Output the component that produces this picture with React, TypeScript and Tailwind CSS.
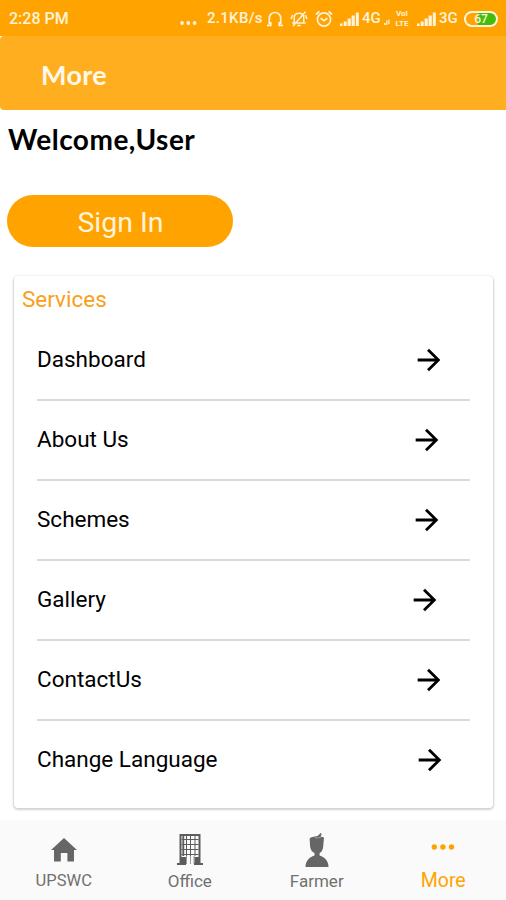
import React from 'react';
import { MdArrowForward } from 'react-icons/md';

const services = [
  { label: 'Dashboard', width: 'w-[109px]', arrow: 'mr-[24px]' },
  { label: 'About Us', width: 'w-[92px]', arrow: 'mr-[26px]' },
  { label: 'Schemes', width: 'w-[93px]', arrow: 'mr-[26px]' },
  { label: 'Gallery', width: 'w-[70px]', arrow: 'mr-[28px]' },
  { label: 'ContactUs', width: 'w-[105px]', arrow: 'mr-[24px]' },
  { label: 'Change Language', width: 'w-[181px]', arrow: 'mr-[23px]' },
];

const Signal: React.FC = () => (
  <svg width="19" height="14" viewBox="0 0 19 14" fill="#fff3dc">
    <rect x="0" y="11.5" width="2.6" height="2.5" />
    <rect x="3.7" y="9.5" width="3" height="4.5" />
    <rect x="7.6" y="6.5" width="3.2" height="7.5" />
    <rect x="11.6" y="3.5" width="3.2" height="10.5" />
    <rect x="15.8" y="0.5" width="3" height="13.5" />
  </svg>
);

const StatusBar: React.FC = () => (
  <header className="flex h-9 items-center bg-[#ffa300] pl-[9px] pr-2 pt-px text-[16px] font-medium text-[#fff3dc]">
    <span className="w-[171px] whitespace-nowrap">2:28 PM</span>
    <svg className="mt-2" width="18" height="4" viewBox="0 0 18 4" fill="currentColor">
      <circle cx="2" cy="2" r="1.9" />
      <circle cx="8.3" cy="2" r="1.9" />
      <circle cx="14.6" cy="2" r="1.9" />
    </svg>
    <span className="ml-[9px] w-[57px] whitespace-nowrap text-[15px] tracking-[0.3px]">2.1KB/s</span>
    <svg className="ml-[2px]" width="18" height="18" viewBox="0 0 18 18" fill="none" stroke="currentColor" strokeWidth="1.7">
      <path d="M3.3 14V8.2a5.7 5.7 0 0 1 11.4 0V14M1 15.3h3.8v-3.2M17 15.3h-3.8v-3.2" />
    </svg>
    <svg className="ml-[6px]" width="18" height="18" viewBox="0 0 18 18" fill="none" stroke="currentColor" strokeWidth="1.5">
      <path d="M4.2 12.8V8c0-2.8 2-4.7 4.8-4.7s4.8 1.9 4.8 4.7v4.8M2.2 13.1h13.6M7.2 15.5h3.6M15.5 1.8 3 16M1 9 2.7 5M17 9l-1.7-4" />
    </svg>
    <svg className="ml-[7px]" width="18" height="18" viewBox="0 0 18 18" fill="none" stroke="currentColor" strokeWidth="1.7">
      <circle cx="9" cy="9.5" r="6.6" />
      <path d="m5.6 8.2 3.4 2.6 3.4-2.6M1 4.5 4.4 1.4M17 4.5l-3.4-3.1" />
    </svg>
    <span className="ml-[7px]"><Signal /></span>
    <span className="ml-[3px] w-[21px] text-[15px]">4G</span>
    <svg className="ml-px mt-[7px]" width="6" height="6" viewBox="0 0 6 6" fill="currentColor">
      <path d="M0 4h1.5v2H0zM2.2 1.5h1.3V6H2.2zM4.3.5h1.3V5H4.3z" />
    </svg>
    <span className="ml-[3px] flex w-[18px] shrink-0 flex-col text-center text-[8px] font-bold leading-[10px]">
      <span>VoI</span>
      <span>LTE</span>
    </span>
    <span className="ml-[6px]"><Signal /></span>
    <span className="ml-[3px] w-[21px] text-[15px]">3G</span>
    <div className="ml-[4px] flex h-4 w-[34px] shrink-0 items-center justify-center rounded-full border-2 border-[#fff3dc] bg-[linear-gradient(90deg,#ffa300_40%,#43bd0b_40%)] text-[12px] leading-none">
      67
    </div>
  </header>
);

const HomeIcon: React.FC = () => (
  <svg width="26" height="24" viewBox="0 0 26 24" fill="#666">
    <path d="M13 0 26 12h-3v11.5h-6.6V15H9.8v8.5H3V12H0z" />
  </svg>
);

const OfficeIcon: React.FC = () => (
  <svg width="26" height="32" viewBox="0 0 26 32" fill="none" stroke="#5c5c5c">
    <path strokeWidth="2" d="M3.5 31V2h19v29M0 31h9M17 31h9" />
    <path strokeWidth="1.8" d="M6.3 3v20" />
    <path strokeWidth="1" d="M4.5 6.5h17M4.5 11.5h17M4.5 16.5h17M4.5 21.5h17M9.5 3v20M13.5 3v20M18 3v20" />
    <path stroke="#999" strokeWidth="1" d="M9.5 23v8M13.5 23v8M17 23v8" />
    <path fill="#5c5c5c" stroke="none" d="M3 24h6v7H3zM17.5 24h5.5v7h-5.5z" />
  </svg>
);

const FarmerIcon: React.FC = () => (
  <svg width="24" height="34" viewBox="0 0 24 34" fill="#666">
    <path d="m4.6 5.5 1.8-1.2L12.5 3 15.7 0l1 .8L15.6 3.4l3.4 1.1-.8 9c-.4 4-1.8 5.5-3.6 6.6v2.4C20 24.2 23.5 28 23.5 34H.5c0-6 3.5-9.8 9-11.5v-2.4C7 19 5.6 17 5.1 13.5z" />
    <path d="M10 4.8c2 .3 4 .1 6-.5" fill="none" stroke="#aaa" strokeWidth=".8" />
  </svg>
);

const DotsIcon: React.FC = () => (
  <svg width="24" height="6" viewBox="0 0 24 6" fill="#ffa300">
    <circle cx="3.3" cy="3" r="2.7" />
    <circle cx="11.9" cy="3" r="2.7" />
    <circle cx="20.5" cy="3" r="2.7" />
  </svg>
);

const tabs = [
  { label: 'UPSWC', icon: <HomeIcon />, iconStyle: 'pb-px pl-px', style: 'pl-px text-[16.5px] text-[#707070]' },
  { label: 'Office', icon: <OfficeIcon />, iconStyle: 'pb-[2px]', style: 'text-[17px] text-[#707070]' },
  { label: 'Farmer', icon: <FarmerIcon />, iconStyle: 'pl-px', style: 'pl-px text-[17px] text-[#707070]' },
  { label: 'More', icon: <DotsIcon />, iconStyle: 'pb-[6px] pl-px', style: 'pl-px text-[19.5px] text-[#ffa300]' },
];

export default function App() {
  return (
    <div className="flex h-[900px] w-[506px] flex-col overflow-hidden bg-white font-[Roboto,sans-serif] text-black">
      <StatusBar />
      <div className="bg-white">
        <div className="flex h-[74px] items-center rounded-l-[4px] bg-[#ffae20] pl-[41px] pt-[5px] font-[Lato,sans-serif] text-[27px] font-bold tracking-[0.3px] text-[#fff8e8]">
          More
        </div>
      </div>

      <main className="flex flex-1 flex-col">
        <h1 className="ml-[8px] mt-[11px] h-9 whitespace-nowrap font-[Lato,sans-serif] text-[28px] font-bold leading-9 tracking-[0.5px]">
          Welcome,User
        </h1>
        <button className="ml-[7px] mt-[38px] h-[52px] w-[226px] rounded-full bg-[#ffa300] pl-px pt-[4px] text-[28.5px] leading-none text-[#fff3dc]">
          Sign In
        </button>
        <section className="ml-[14px] mt-[29px] h-[532px] w-[479px] rounded-[4px] bg-white shadow-[0_1px_2px_1px_rgba(0,0,0,0.18)]">
          <h2 className="h-[45px] pl-[8px] pt-[9px] text-[22.5px] leading-7 text-[#f9a01b]">Services</h2>
          <ul className="ml-[23px] w-[433px]">
            {services.map(({ label, width, arrow }) => (
              <li
                key={label}
                className="flex h-[80px] items-center justify-between border-b-2 border-[#dadada] text-[22.5px] last:border-transparent"
              >
                <span className={`${width} whitespace-nowrap`}>{label}</span>
                <MdArrowForward className={arrow} size={34} />
              </li>
            ))}
          </ul>
        </section>
      </main>

      <nav className="flex h-[80px] bg-[#fafafa] pb-[5px]">
        {tabs.map(({ label, icon, iconStyle, style }) => (
          <button key={label} className="flex w-[126.5px] flex-col items-center">
            <span className={`flex h-[60px] items-center ${iconStyle}`}>{icon}</span>
            <span className={`${style} -mt-[9px] leading-5`}>{label}</span>
          </button>
        ))}
      </nav>
    </div>
  );
}
